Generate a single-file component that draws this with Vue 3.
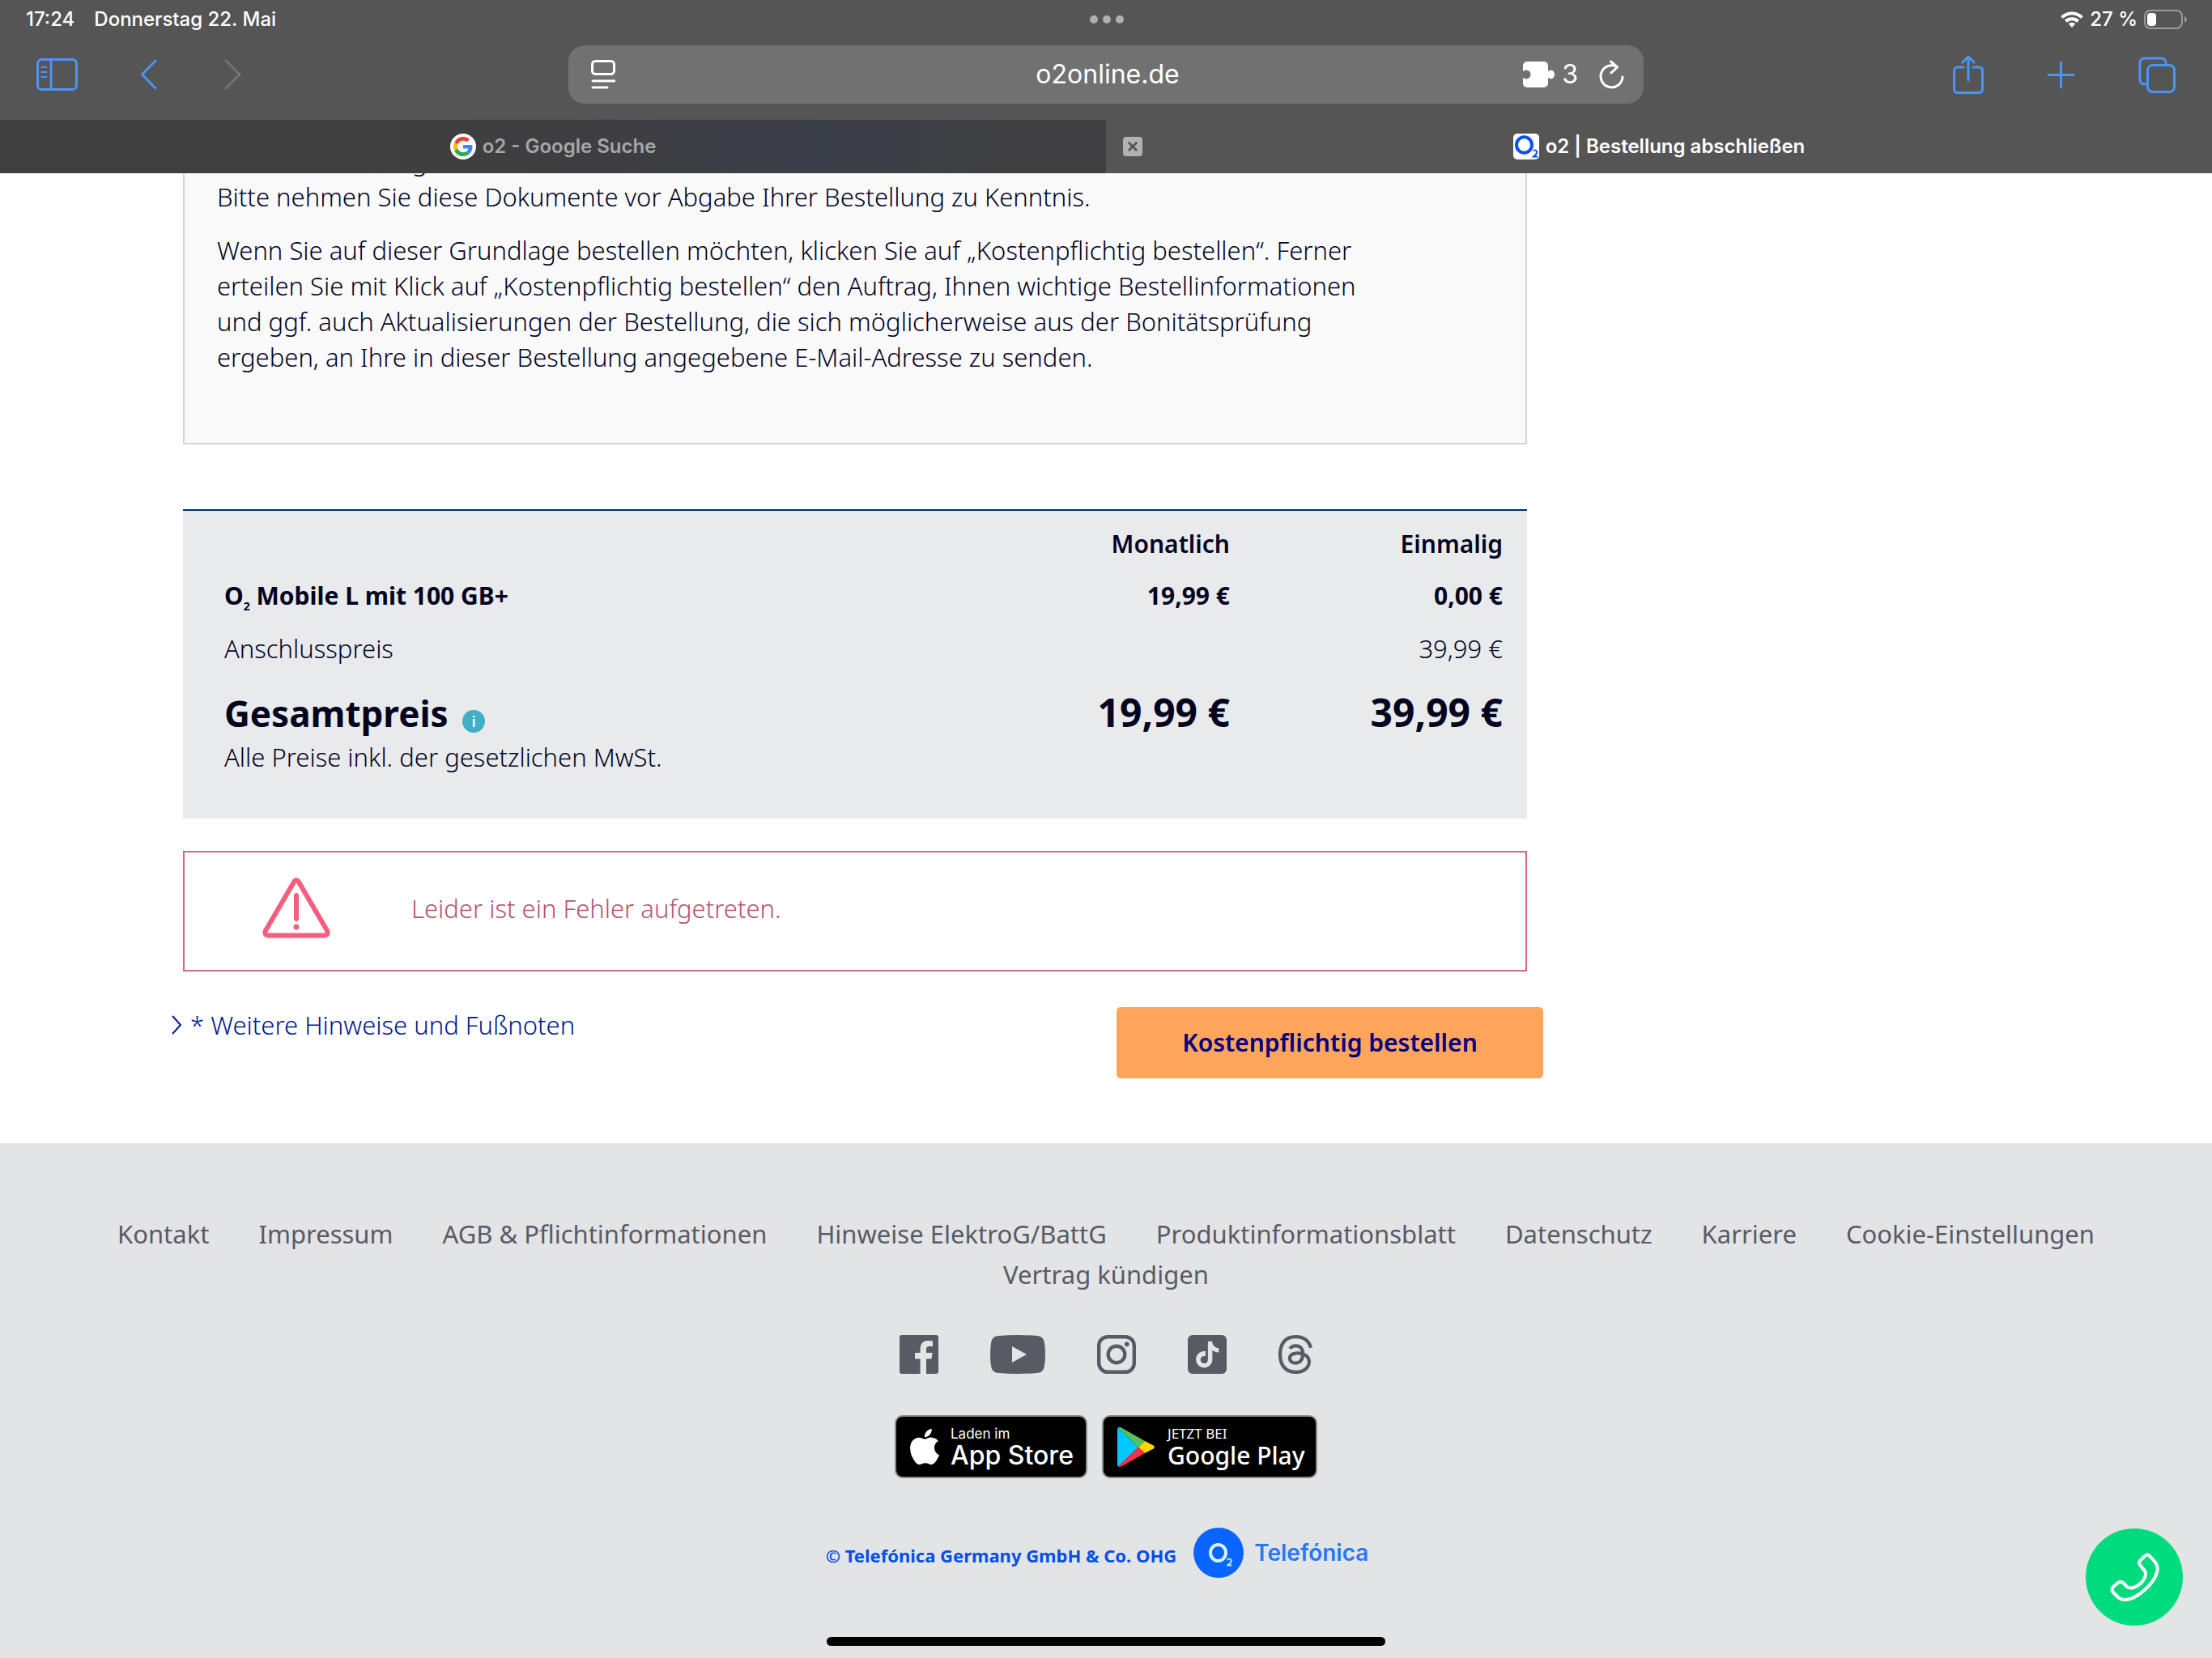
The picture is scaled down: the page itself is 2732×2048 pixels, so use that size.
<script setup>
import { ref } from 'vue'

const address = ref('o2online.de')

const footerLinks = [
  'Kontakt',
  'Impressum',
  'AGB & Pflichtinformationen',
  'Hinweise ElektroG/BattG',
  'Produktinformationsblatt',
  'Datenschutz',
  'Karriere',
  'Cookie-Einstellungen',
  'Vertrag kündigen'
]
</script>

<template>
  <div class="screen">
    <header class="browser">
      <div class="status">
        <div class="status-side">
          <span>17:24</span>
          <span>Donnerstag 22. Mai</span>
        </div>
        <div class="dots"><i></i><i></i><i></i></div>
        <div class="status-side status-right">
          <svg width="28" height="20" viewBox="0 0 28 20" fill="none" stroke="#fff" stroke-width="4">
            <path d="M1.6 7.6a17.4 17.4 0 0 1 24.8 0" />
            <path d="M6.4 12.4a10.8 10.8 0 0 1 15.2 0" />
            <path d="M14 20l-4.2-4.6a6 6 0 0 1 8.4 0z" fill="#fff" stroke="none" />
          </svg>
          <span>27 %</span>
          <svg width="54" height="24" viewBox="0 0 54 24">
            <rect x="1" y="1" width="46" height="22" rx="7" fill="none" stroke="#9b9b9b" stroke-width="2" />
            <rect x="4" y="4" width="11" height="16" rx="4" fill="#fff" />
            <path d="M50 8q3 1.500 3 4t-3 4z" fill="#9b9b9b" />
          </svg>
        </div>
      </div>

      <div class="toolbar">
        <div class="tools">
          <button type="button" aria-label="Seitenleiste">
            <svg width="51" height="40" viewBox="0 0 51 40" fill="none" stroke="#4a94f6" stroke-width="3">
              <rect x="1.500" y="1.500" width="48" height="37" rx="5" />
              <path d="M18 2v36" />
              <path d="M6.500 11h6M6.500 17h6M6.500 23h6" stroke-width="2" stroke-linecap="round" />
            </svg>
          </button>
          <button type="button" aria-label="Zurück">
            <svg width="24" height="40" viewBox="0 0 24 40" fill="none" stroke="#4a94f6" stroke-width="3" stroke-linecap="round" stroke-linejoin="round">
              <path d="M18 3L1.500 20 18 37" />
            </svg>
          </button>
          <button type="button" aria-label="Vorwärts" disabled>
            <svg width="24" height="40" viewBox="0 0 24 40" fill="none" stroke="#737374" stroke-width="3" stroke-linecap="round" stroke-linejoin="round">
              <path d="M3 3l17 17L3 37" />
            </svg>
          </button>
        </div>
        <div class="address">
          <button type="button" aria-label="Reader">
            <svg width="30" height="36" viewBox="0 0 30 36" fill="none" stroke="#fff" stroke-width="3" stroke-linecap="round">
              <rect x="1.500" y="1.500" width="27" height="16" rx="4" />
              <path d="M2 26h27M2 34h18" />
            </svg>
          </button>
          <input v-model="address" type="text" aria-label="Adresse" />
          <div class="address-end">
            <button type="button" class="extensions" aria-label="Erweiterungen">
              <svg width="40" height="32" viewBox="0 0 40 32" fill="#fff">
                <path d="M5 0h21a5 5 0 0 1 5 5v7q2-1 3-1.500a5 5.500 0 1 1 0 11Q33 21 31 20v7a5 5 0 0 1-5 5H5a5 5 0 0 1-5-5v-7q2 1.500 4 1.500a5.500 5.500 0 0 0 0-11q-2 0-4 1.500V5a5 5 0 0 1 5-5z" />
              </svg>
              <span>3</span>
            </button>
            <button type="button" aria-label="Neu laden">
              <svg width="31" height="37" viewBox="0 0 31 37" fill="none" stroke="#fff" stroke-width="3" stroke-linecap="round" stroke-linejoin="round">
                <path d="M22 8.500A13.500 13.500 0 1 0 29 21" />
                <path d="M14.500 2l8 7-7.500 7" />
              </svg>
            </button>
          </div>
        </div>
        <div class="tools tools-right">
          <button type="button" aria-label="Teilen">
            <svg width="38" height="48" viewBox="0 0 38 48" fill="none" stroke="#4a94f6" stroke-width="3" stroke-linecap="round" stroke-linejoin="round">
              <path d="M13 15H6q-4.500 0-4.500 4.500V42q0 4.500 4.500 4.500h26q4.500 0 4.500-4.500V19.500Q36.500 15 32 15h-7" />
              <path d="M19 31V2M12 9l7-7 7 7" />
            </svg>
          </button>
          <button type="button" aria-label="Neuer Tab">
            <svg width="35" height="35" viewBox="0 0 35 35" stroke="#4a94f6" stroke-width="3" stroke-linecap="round">
              <path d="M17.500 2v31M2 17.500h31" />
            </svg>
          </button>
          <button type="button" aria-label="Tabübersicht">
            <svg width="46" height="45" viewBox="0 0 46 45" fill="none" stroke="#4a94f6" stroke-width="3">
              <rect x="11.500" y="10.500" width="33" height="33" rx="6" />
              <path d="M11 34H8q-6 0-6-6V8q0-6 6-6h20q6 0 6 6v2.500" />
            </svg>
          </button>
        </div>
      </div>

      <nav class="tabs">
        <div class="tab tab-idle">
          <a href="#" class="tab-link">
            <svg width="32" height="32" viewBox="0 0 64 64">
              <circle cx="32" cy="32" r="32" fill="#fff" />
              <g transform="translate(8 8)">
                <path fill="#ea4335" d="M24 9.500c3.540 0 6.710 1.220 9.210 3.600l6.850-6.850C35.900 2.380 30.470 0 24 0 14.620 0 6.510 5.380 2.560 13.220l7.980 6.190C12.430 13.720 17.740 9.500 24 9.500z" />
                <path fill="#4285f4" d="M46.980 24.550c0-1.570-.15-3.090-.38-4.550H24v9.020h12.940c-.58 2.960-2.260 5.480-4.780 7.180l7.730 6c4.510-4.180 7.090-10.360 7.090-17.650z" />
                <path fill="#fbbc05" d="M10.530 28.590c-.48-1.450-.76-2.990-.76-4.590s.27-3.140.76-4.590l-7.980-6.190C.92 16.460 0 20.120 0 24c0 3.880.92 7.540 2.560 10.780l7.970-6.190z" />
                <path fill="#34a853" d="M24 48c6.480 0 11.930-2.130 15.890-5.810l-7.730-6c-2.150 1.450-4.920 2.300-8.160 2.300-6.260 0-11.570-4.220-13.470-9.910l-7.980 6.190C6.510 42.620 14.620 48 24 48z" />
              </g>
            </svg>
            <span>o2 - Google Suche</span>
          </a>
        </div>
        <div class="tab">
          <button type="button" class="tab-close" aria-label="Tab schließen">
            <svg width="24" height="24" viewBox="0 0 24 24">
              <rect width="24" height="24" rx="4" fill="#b1b1b2" />
              <path d="M7.500 7.500l9 9M16.500 7.500l-9 9" stroke="#555" stroke-width="2.500" stroke-linecap="round" />
            </svg>
          </button>
          <a href="#" class="tab-link">
            <svg width="32" height="32" viewBox="0 0 32 32">
              <rect width="32" height="32" rx="5" fill="#fff" />
              <ellipse cx="13.500" cy="14" rx="9.500" ry="9.800" fill="none" stroke="#0a50f0" stroke-width="4" />
              <path d="M25 21.500q3-2 4 .5t-4 6.500h5" fill="none" stroke="#0a50f0" stroke-width="2" />
            </svg>
            <span>o2 | Bestellung abschließen</span>
          </a>
        </div>
      </nav>
    </header>

    <main class="content">
      <section class="terms">
        <div class="terms-text">
          <p><span class="cut">g</span><br />Bitte nehmen Sie diese Dokumente vor Abgabe Ihrer Bestellung zu Kenntnis.</p>
          <p>
            Wenn Sie auf dieser Grundlage bestellen möchten, klicken Sie auf „Kostenpflichtig bestellen“. Ferner<br />
            erteilen Sie mit Klick auf „Kostenpflichtig bestellen“ den Auftrag, Ihnen wichtige Bestellinformationen<br />
            und ggf. auch Aktualisierungen der Bestellung, die sich möglicherweise aus der Bonitätsprüfung<br />
            ergeben, an Ihre in dieser Bestellung angegebene E-Mail-Adresse zu senden.
          </p>
        </div>
      </section>

      <section class="prices">
        <table>
          <thead>
            <tr><td></td><th scope="col">Monatlich</th><th scope="col">Einmalig</th></tr>
          </thead>
          <tbody>
            <tr class="plan"><th scope="row">O<sub>2</sub> Mobile L mit 100 GB+</th><td>19,99 €</td><td>0,00 €</td></tr>
            <tr class="fee"><th scope="row">Anschlusspreis</th><td></td><td>39,99 €</td></tr>
            <tr class="total">
              <th scope="row">Gesamtpreis <button type="button" class="info" aria-label="Information">i</button></th>
              <td>19,99 €</td>
              <td>39,99 €</td>
            </tr>
          </tbody>
        </table>
        <p class="note">Alle Preise inkl. der gesetzlichen MwSt.</p>
      </section>

      <section class="error" role="alert">
        <svg width="84" height="75" viewBox="0 0 84 75" fill="none" stroke="#f45f7f" stroke-linecap="round" stroke-linejoin="round">
          <path d="M39 5.500q3-4.500 6 0l35 60q2 5.500-3 6H7q-5-.5-3-6z" stroke-width="6" />
          <path d="M42 22v29" stroke-width="6" />
          <circle cx="42" cy="61" r="3.500" fill="#f45f7f" stroke="none" />
        </svg>
        <p>Leider ist ein Fehler aufgetreten.</p>
      </section>

      <div class="actions">
        <a href="#" class="notes-link">
          <svg width="13" height="24" viewBox="0 0 13 24" fill="none" stroke="#001a8c" stroke-width="2">
            <path d="M1 1l10 11L1 23" />
          </svg>
          <span>* Weitere Hinweise und Fußnoten</span>
        </a>
        <button type="button" class="order">Kostenpflichtig bestellen</button>
      </div>
    </main>

    <footer class="footer">
      <nav class="links">
        <a v-for="link in footerLinks" :key="link" href="#">{{ link }}</a>
      </nav>

      <div class="social">
        <a href="#" aria-label="Facebook">
          <svg width="48" height="48" viewBox="0 0 48 48">
            <path fill="#5a5a64" d="M3 0h42a3 3 0 0 1 3 3v42a3 3 0 0 1-3 3H33V29.500h6.500l1-7.500H33v-4.500q0-3.500 4-3.500h4V7.400Q39 7 35.500 7 25.600 7 25.600 16.500V22H19v7.500h6.600V48H3a3 3 0 0 1-3-3V3a3 3 0 0 1 3-3z" />
          </svg>
        </a>
        <a href="#" aria-label="YouTube">
          <svg width="68" height="48" viewBox="0 0 68 48">
            <path fill="#5a5a64" d="M11 1Q34-1 57 1q9 0 10 9 2 14 0 28-1 9-10 9-23 2-46 0-9 0-10-9-2-14 0-28 1-9 10-9z" />
            <path fill="#e3e4e6" d="M27 14l18 10-18 10z" />
          </svg>
        </a>
        <a href="#" aria-label="Instagram">
          <svg width="48" height="48" viewBox="0 0 48 48" fill="none" stroke="#5a5a64">
            <rect x="2.200" y="2.200" width="43.600" height="43.600" rx="11" stroke-width="4.400" />
            <circle cx="24" cy="24" r="10.300" stroke-width="4.400" />
            <circle cx="36.800" cy="11.300" r="2.900" fill="#5a5a64" stroke="none" />
          </svg>
        </a>
        <a href="#" aria-label="TikTok">
          <svg width="48" height="48" viewBox="0 0 48 48">
            <rect width="48" height="48" rx="6" fill="#5a5a64" />
            <g transform="translate(8 8) scale(1.350)">
              <path fill="#e3e4e6" d="M12.525.02c1.310-.02 2.610-.01 3.910-.02.08 1.530.63 3.090 1.750 4.170 1.120 1.110 2.700 1.620 4.240 1.790v4.030c-1.440-.05-2.890-.35-4.200-.97-.57-.26-1.100-.59-1.620-.93-.01 2.920.01 5.840-.02 8.750-.08 1.400-.54 2.790-1.350 3.940-1.310 1.920-3.580 3.170-5.910 3.210-1.430.08-2.860-.31-4.080-1.030-2.020-1.190-3.440-3.370-3.650-5.710-.02-.5-.03-1-.01-1.490.18-1.900 1.120-3.720 2.580-4.960 1.660-1.440 3.980-2.130 6.150-1.720.02 1.480-.04 2.960-.04 4.440-.99-.32-2.150-.23-3.020.37-.63.41-1.110 1.040-1.360 1.750-.21.51-.15 1.070-.14 1.610.24 1.640 1.820 3.020 3.500 2.870 1.120-.01 2.190-.66 2.770-1.610.19-.33.4-.67.41-1.060.1-1.790.06-3.570.07-5.360.01-4.030-.01-8.050.02-12.070z" />
            </g>
          </svg>
        </a>
        <a href="#" aria-label="Threads">
          <svg width="42" height="48" viewBox="1.500 0 21 24">
            <path fill="#5a5a64" d="M12.186 24h-.007c-3.581-.024-6.334-1.205-8.184-3.509C2.350 18.440 1.500 15.586 1.472 12.010v-.017c.03-3.579.879-6.430 2.525-8.482C5.845 1.205 8.600.024 12.180 0h.014c2.746.02 5.043.725 6.826 2.098 1.677 1.290 2.858 3.130 3.509 5.467l-2.040.569c-1.104-3.960-3.898-5.984-8.304-6.015-2.910.022-5.110.936-6.540 2.717C4.307 6.504 3.616 8.914 3.589 12c.027 3.086.718 5.496 2.057 7.164 1.430 1.783 3.631 2.698 6.540 2.717 2.623-.02 4.358-.631 5.800-2.045 1.647-1.613 1.618-3.593 1.090-4.798-.31-.71-.873-1.300-1.634-1.750-.192 1.352-.622 2.446-1.284 3.272-.886 1.102-2.140 1.704-3.730 1.790-1.202.065-2.361-.218-3.259-.801-1.063-.689-1.685-1.740-1.752-2.964-.065-1.190.408-2.285 1.330-3.082.88-.76 2.119-1.207 3.583-1.291a13.853 13.853 0 0 1 3.020.142c-.126-.742-.375-1.332-.75-1.757-.513-.586-1.308-.883-2.359-.89h-.029c-.844 0-1.992.232-2.721 1.320L7.734 7.847c.98-1.454 2.568-2.256 4.478-2.256h.044c3.194.02 5.097 1.975 5.287 5.388.108.046.216.094.321.142 1.490.7 2.580 1.761 3.154 3.070.797 1.820.871 4.790-1.548 7.158-1.850 1.810-4.094 2.628-7.277 2.650Zm1.003-11.690c-.242 0-.487.007-.739.021-1.836.103-2.980.946-2.916 2.143.067 1.256 1.452 1.839 2.784 1.767 1.224-.065 2.818-.543 3.086-3.710a10.500 10.500 0 0 0-2.215-.221z" />
          </svg>
        </a>
      </div>

      <div class="stores">
        <a href="#" class="store apple">
          <svg width="36" height="44" viewBox="2.200 0 19.600 24">
            <path fill="#fff" d="M12.152 6.896c-.948 0-2.415-1.078-3.960-1.040-2.040.027-3.910 1.183-4.961 3.014-2.117 3.675-.546 9.103 1.519 12.090 1.013 1.454 2.208 3.090 3.792 3.039 1.520-.065 2.090-.987 3.935-.987 1.831 0 2.350.987 3.960.948 1.637-.026 2.676-1.480 3.676-2.948 1.156-1.688 1.636-3.325 1.662-3.415-.039-.013-3.182-1.221-3.220-4.857-.026-3.040 2.480-4.494 2.597-4.559-1.429-2.090-3.623-2.324-4.390-2.376-2-.156-3.675 1.090-4.610 1.090zM15.530 3.830c.843-1.012 1.400-2.427 1.245-3.830-1.207.052-2.662.805-3.532 1.818-.78.896-1.454 2.338-1.273 3.714 1.338.104 2.715-.688 3.559-1.701" />
          </svg>
          <span class="store-text"><small>Laden im</small><strong>App Store</strong></span>
        </a>
        <a href="#" class="store google">
          <svg width="46" height="51" viewBox="0 0 46 51">
            <path fill="#00c8ff" d="M1 1.500Q0 2 0 4v43q0 2 1 2.500L26 25.500z" />
            <path fill="#58c15a" d="M1 1.500Q2 0 5 1.500l29 16.500-8 7.500z" />
            <path fill="#f8304c" d="M1 49.500Q2 51 5 49.500L34 33l-8-7.500z" />
            <path fill="#ffd500" d="M34 18l10.500 5.500q3 2 0 4L34 33l-8-7.500z" />
          </svg>
          <span class="store-text"><small>JETZT BEI</small><strong>Google Play</strong></span>
        </a>
      </div>

      <div class="legal">
        <a href="#" class="copyright">© Telefónica Germany GmbH &amp; Co. OHG</a>
        <a href="#" class="brand">
          <svg width="62" height="62" viewBox="0 0 62 62">
            <circle cx="31" cy="31" r="31" fill="#0a64ff" />
            <ellipse cx="30.500" cy="31" rx="9.500" ry="10" fill="none" stroke="#d5f6ff" stroke-width="4" />
            <path d="M41.500 40q3.500-3 5 0t-5 6.500h6" fill="none" stroke="#b5e5ff" stroke-width="2" />
          </svg>
          <span>Telefónica</span>
        </a>
      </div>
    </footer>

    <button type="button" class="call" aria-label="Anrufen">
      <svg width="120" height="120" viewBox="0 0 120 120" fill="none" stroke="#fff" stroke-width="4" stroke-linejoin="round">
        <path d="M73 34q3.500-3 7 1l6 7q4 5 2 12C84 70 62 87 50 88q-6 .5-10-3l-6-6q-3-3 0-7l6-5q3-2 6 0l3 3q4 5 10 3C68 70 74 62 74 56q0-4-4-7l-3-4q-2-3 0-5z" />
      </svg>
    </button>
    <div class="home-bar"></div>
  </div>
</template>

<style>
body {
  margin: 0;
  background: #fff;
}
</style>

<style scoped>
.screen {
  position: relative;
  display: flex;
  flex-direction: column;
  min-height: 100vh;
  font-family: 'Noto Sans', 'Open Sans', sans-serif;
  font-size: 31px;
  font-weight: 300;
  line-height: 44px;
  color: #04041f;
}
button {
  display: block;
  border: 0;
  padding: 0;
  background: none;
  font: inherit;
  color: inherit;
}
a {
  color: inherit;
  text-decoration: none;
}
p {
  margin: 0;
}
svg {
  display: block;
  flex: none;
}

/* Browser chrome */
.browser {
  background: #555556;
  color: #fff;
  font-family: Inter, sans-serif;
}
.status {
  display: grid;
  grid-template-columns: 1fr auto 1fr;
  align-items: center;
  height: 48px;
  padding: 0 30px 0 32px;
  font-size: 24px;
  font-weight: 500;
  line-height: 48px;
}
.status-side {
  display: flex;
  gap: 24px;
  align-items: center;
}
.status-right {
  justify-content: flex-end;
  gap: 8px;
}
.dots {
  display: flex;
  gap: 6px;
}
.dots i {
  width: 10px;
  height: 10px;
  border-radius: 50%;
  background: #b0b0b0;
}
.toolbar {
  display: flex;
  height: 72px;
  padding: 8px 45px 20px;
}
.tools {
  display: flex;
  flex: 1;
  align-items: center;
  gap: 78px;
}
.tools-right {
  justify-content: flex-end;
}
.address {
  display: grid;
  grid-template-columns: 1fr 2fr 1fr;
  align-items: center;
  flex: 0 1 1328px;
  box-sizing: border-box;
  padding: 0 24px 0 28px;
  border-radius: 20px;
  background: #717172;
}
.address input {
  min-width: 0;
  border: 0;
  padding: 0;
  background: none;
  color: #fff;
  font: 400 32px/44px Inter, sans-serif;
  text-align: center;
}
.address-end {
  display: flex;
  justify-content: flex-end;
  align-items: center;
  gap: 26px;
}
.extensions {
  display: flex;
  align-items: center;
  gap: 8px;
  font-size: 32px;
  font-weight: 400;
}
.tabs {
  display: grid;
  grid-template-columns: 1fr 1fr;
}
.tab {
  position: relative;
  display: flex;
  align-items: center;
  justify-content: center;
  height: 66px;
}
.tab-idle {
  background: linear-gradient(90deg, #404040 30%, #3e3e42 55%, #3b3f49 74%, #404042 92%);
  color: #a7a7a8;
}
.tab-link {
  display: flex;
  align-items: center;
  gap: 8px;
  font-size: 24px;
  font-weight: 600;
  line-height: 32px;
}
.tab-close {
  position: absolute;
  left: 21px;
}

/* Order page */
.content {
  box-sizing: border-box;
  width: 100%;
  max-width: 1906px;
  padding: 0 0 80px 206px;
}
.terms {
  margin: 0 20px;
  overflow: hidden;
  border: 2px solid #d3d4d6;
  border-top: 0;
  background: #fafafb;
}
.terms-text {
  margin-top: -37px;
  padding: 0 40px 84px;
}
.terms-text p + p {
  margin-top: 22px;
}
.cut {
  padding-left: 241px;
}
.prices {
  margin: 80px 20px 0;
  padding: 19px 30px 54px 51px;
  border-top: 2px solid #003468;
  background: #e8eaec;
}
.prices table {
  width: 100%;
  border-collapse: collapse;
  table-layout: fixed;
}
.prices th,
.prices td {
  padding: 0;
  text-align: right;
  vertical-align: baseline;
  font-weight: inherit;
}
.prices tr > :first-child {
  width: 900px;
  text-align: left;
}
.prices thead th,
.plan {
  font-size: 30px;
  font-weight: 700;
}
.prices thead th {
  font-weight: 600;
}
.prices tr > :last-child {
  width: 337px;
}
.prices .plan > * {
  padding-top: 20px;
}
.prices .fee > * {
  padding-top: 21px;
}
.prices .total > * {
  padding-top: 27px;
  font-size: 48px;
  font-weight: 700;
  line-height: 60px;
}
.prices .total > th {
  font-size: 44px;
}
.plan sub {
  font-size: 14px;
  line-height: 0;
}
.info {
  display: inline-block;
  width: 28px;
  height: 28px;
  margin-left: 6px;
  border-radius: 50%;
  background: #3fb0c8;
  color: #fff;
  font-size: 18px;
  font-weight: 600;
  line-height: 28px;
  text-align: center;
}
.note {
  margin-top: 2px;
}
.error {
  display: flex;
  align-items: center;
  gap: 100px;
  margin: 40px 20px 0;
  padding: 31px 96px 39px;
  border: 2px solid #d6687f;
  color: #b5536c;
}
.actions {
  display: flex;
  justify-content: space-between;
  align-items: flex-start;
  margin-top: 44px;
}
.notes-link {
  display: flex;
  align-items: center;
  gap: 10px;
  padding-left: 6px;
  color: #001a8c;
}
.order {
  width: 527px;
  height: 88px;
  border-radius: 5px;
  background: #ffa55c;
  color: #000080;
  font-size: 30px;
  font-weight: 600;
}

/* Footer */
.footer {
  flex: 1;
  padding: 87px 80px 99px;
  background: #e3e4e6;
}
.links {
  display: flex;
  flex-wrap: wrap;
  justify-content: center;
  column-gap: 61px;
  color: #5a5a64;
  font-weight: 400;
  line-height: 50px;
}
.social {
  display: flex;
  justify-content: center;
  gap: 64px;
  margin-top: 50px;
}
.stores {
  display: flex;
  justify-content: center;
  gap: 18px;
  margin-top: 51px;
}
.store {
  display: flex;
  align-items: center;
  box-sizing: border-box;
  height: 78px;
  padding: 0 17px;
  border: 2px solid #8c8c8c;
  border-radius: 10px;
  background: #000;
  color: #fff;
  white-space: nowrap;
}
.store-text {
  display: flex;
  flex-direction: column;
}
.store small {
  font-size: 17px;
  font-weight: 400;
  line-height: 22px;
}
.store strong {
  font-weight: 500;
  line-height: 32px;
}
.apple {
  gap: 14px;
  width: 238px;
  font-family: Inter, sans-serif;
  font-size: 32px;
}
.google {
  gap: 16px;
  width: 266px;
  font-size: 30px;
}
.legal {
  display: flex;
  justify-content: center;
  align-items: center;
  gap: 21px;
  margin-top: 61px;
  padding-right: 22px;
}
.copyright {
  padding-top: 6px;
  color: #0050e6;
  font-size: 22px;
  font-weight: 700;
}
.brand {
  display: flex;
  align-items: center;
  gap: 13px;
  color: #2878f5;
  font: 600 28px/44px Inter, sans-serif;
}
.call {
  position: fixed;
  right: 36px;
  bottom: 40px;
  width: 120px;
  height: 120px;
  border-radius: 50%;
  background: #00dc7d;
}
.home-bar {
  position: fixed;
  bottom: 15px;
  left: 50%;
  width: 690px;
  height: 11px;
  border-radius: 6px;
  background: #000;
  transform: translateX(-50%);
}
</style>
